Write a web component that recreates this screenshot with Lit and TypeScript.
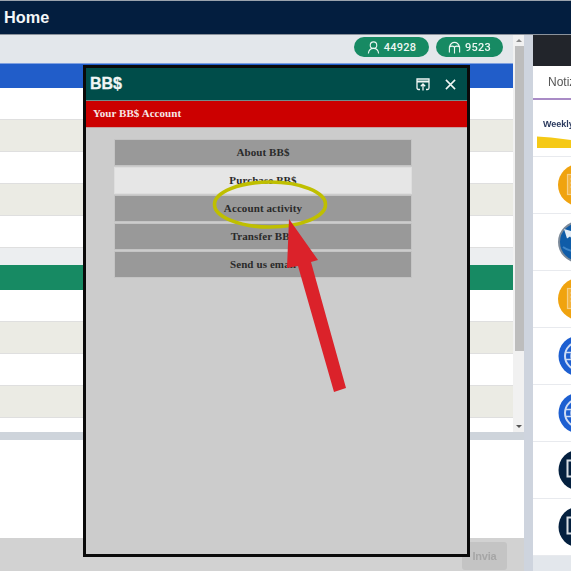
import { LitElement, html, css, svg } from "lit";
import { customElement } from "lit/decorators.js";

const orange = svg`<circle cx="21" cy="21" r="21" fill="#f0a30f"/><rect x="9.500" y="10.500" width="14" height="20" fill="#f3b23c" stroke="#f6cf85" stroke-width="1.200"/><path d="M12 15h9M12 19h9M12 23h5" stroke="#f6cf85" stroke-width="1"/>`;
const globe = svg`<circle cx="21" cy="21" r="20" fill="#0f5ca8" stroke="#7c8a9a" stroke-width="2"/><path d="M6 8l12 3.500-3 8-3-4-3 2z" fill="#e4edf6"/><path d="M5 26c8 6 20 6 34 0" stroke="#3f86c9" fill="none" stroke-width="2"/>`;
const web = svg`<circle cx="21" cy="21" r="20.500" fill="#1d5fd1"/><circle cx="21" cy="21" r="14" fill="none" stroke="#cfdcf4" stroke-width="2"/><circle cx="21" cy="21" r="8" fill="none" stroke="#cfdcf4" stroke-width="1.500"/><path d="M8 17.500h26M8 24.500h26" stroke="#cfdcf4" stroke-width="1.500"/>`;
const dark = svg`<circle cx="21" cy="21" r="20.500" fill="#04203f"/><path d="M9.500 11.500h22v16H18l-4 4.500v-4.500H9.500z" fill="none" stroke="#d7dde4" stroke-width="2"/>`;

@customElement("app-root")
export class AppRoot extends LitElement {
  static styles = css`
    :host { display: block; width: 571px; height: 571px; overflow: hidden; font-family: "Liberation Sans", Arial, sans-serif; background: #fff; }
    .stage { position: relative; width: 571px; height: 571px; display: flex; flex-direction: column; filter: blur(0.55px); }
    .top { height: 35px; flex: none; box-sizing: border-box; background: #031e3f; border-top: 1px solid #9aa3ad; border-bottom: 1px solid #8b929b; color: #f4f6f8; font-weight: 700; font-size: 16.300px; line-height: 33px; padding-left: 4px; }
    .main { flex: 1; display: flex; min-height: 0; }
    .left { width: 524px; flex: none; display: flex; flex-direction: column; }
    .gutter { width: 9px; flex: none; background: #ced4de; }
    .right { flex: 1; min-width: 0; display: flex; flex-direction: column; }
    .upper { height: 397px; flex: none; display: flex; }
    .content { width: 513px; flex: none; display: flex; flex-direction: column; }
    .tools { height: 28px; flex: none; background: #e3e7eb; display: flex; justify-content: flex-end; align-items: flex-start; gap: 7px; padding: 2px 10px 0 0; box-sizing: border-box; }
    .pill { height: 20px; border-radius: 10px; background: #178a63; color: #eef7f3; display: flex; align-items: center; justify-content: center; gap: 4px; font-family: Roboto, sans-serif; font-size: 11px; font-weight: 500; letter-spacing: 0.200px; }
    .pill.a { width: 75px; } .pill.b { width: 67px; }
    .pill svg { width: 13px; height: 13px; }
    .head { height: 25px; flex: none; box-sizing: border-box; border-top: 1px solid #7fa0e0; }
    .head.blue { background: #215dc9; }
    .head.green { background: #178a63; border-top: none; }
    .row { height: 32px; flex: none; box-sizing: border-box; background: #fff; border-bottom: 1px solid #dfdfdf; }
    .row.alt { background: #ebebe4; }
    .row.cut { height: 15px; border-bottom: none; }
    .spacer { height: 17px; flex: none; background: #eceef0; }
    .bar { width: 11px; flex: none; background: #f1f1f1; display: flex; flex-direction: column; align-items: flex-end; }
    .btn { height: 11px; flex: none; width: 100%; display: flex; align-items: center; justify-content: center; background: #f1f1f1; }
    .tri { width: 0; height: 0; border-left: 3px solid transparent; border-right: 3px solid transparent; }
    .tri.up { border-bottom: 3px solid #8a8a8a; } .tri.dn { border-top: 3px solid #555; }
    .thumb { height: 305px; width: 9px; background: #bdbdbd; flex: none; }
    .trackrest { flex: 1; }
    .sep { height: 8px; flex: none; background: #ced4db; }
    .lower { flex: 1; background: #fff; }
    .foot { height: 33px; flex: none; background: #d2d2d2; display: flex; justify-content: flex-end; padding: 4px 17px 0 0; box-sizing: border-box; }
    .send { width: 45px; height: 28px; border-radius: 3px; background: #c4c4c4; color: #a6a6a6; font-size: 11px; font-weight: 700; letter-spacing: -0.200px; display: flex; align-items: center; justify-content: center; }
    .rtop { height: 31px; flex: none; background: #22252b; }
    .tabs { height: 34px; flex: none; box-sizing: border-box; background: #fff; border-bottom: 2px solid #a98bc6; color: #555; font-size: 12px; line-height: 32px; padding-left: 15px; overflow: hidden; white-space: nowrap; }
    .weekly { height: 57px; flex: none; box-sizing: border-box; border-bottom: 1px solid #e8eaee; padding: 19px 0 0 10px; color: #2b3a5e; font-size: 9px; font-weight: 700; display: flex; flex-direction: column; gap: 7px; white-space: nowrap; overflow: hidden; background: #fff; }
    .weekly svg { display: block; margin-left: -6px; flex: none; }
    .item { height: 57px; flex: none; box-sizing: border-box; border-bottom: 1px solid #e8eaee; display: flex; align-items: center; padding-left: 25px; background: #fff; overflow: hidden; }
    .item svg { width: 42px; height: 42px; flex: none; }
    .rfoot { flex: 1; background: #e3e7ec; }
    .modal { position: absolute; left: 83px; top: 65px; width: 387px; height: 492px; box-sizing: border-box; border: 3px solid #0a0a0a; background: #cccccc; display: flex; flex-direction: column; }
    .mt { height: 33px; flex: none; box-sizing: border-box; background: #004d4a; border-bottom: 1px solid #6f8f8c; color: #f0f6f5; font-weight: 700; font-size: 16px; -webkit-text-stroke: 0.300px #f0f6f5; display: flex; align-items: center; justify-content: space-between; padding: 0 11px 0 4px; }
    .mi { display: flex; gap: 15px; align-items: center; }
    .mi svg { display: block; }
    .mr { height: 27px; flex: none; box-sizing: border-box; background: #cc0000; border-bottom: 1px solid #c9a0a0; color: #f7e6e6; font: 700 11px/25px "Liberation Serif", serif; letter-spacing: 0.060px; padding-left: 7px; }
    .menu { margin: 11px 55px 0 28px; display: flex; flex-direction: column; gap: 1px; }
    .mb { height: 27px; box-sizing: border-box; border: 1px solid #c4c4c4; background: #999; color: #2a2a2a; font: 700 11px/25px "Liberation Serif", serif; letter-spacing: 0.100px; text-align: center; }
    .mb.on { background: #e6e6e6; border-color: #dedede; }
    .ann { position: absolute; left: 0; top: 0; width: 571px; height: 571px; pointer-events: none; }
    .ring { fill: none; stroke: #bfbf00; stroke-width: 3.600px; }
    .arrow { fill: #db222a; }
  `;

  render() {
    const rows = (cutLast: boolean) => html`
      <div class="row"></div><div class="row alt"></div><div class="row"></div><div class="row alt"></div>
      <div class="row ${cutLast ? "cut" : ""}"></div>`;
    return html`
      <div class="stage">
        <div class="top">Home</div>
        <div class="main">
          <div class="left">
            <div class="upper">
              <div class="content">
                <div class="tools">
                  <div class="pill a"><svg viewBox="0 0 14 14" fill="none" stroke="#eef7f3" stroke-width="1.200"><circle cx="7" cy="4.500" r="3.500"/><path d="M1.500 13.500c.3-3.500 2.500-5.500 5.500-5.500s5.200 2 5.500 5.500"/></svg>44928</div>
                  <div class="pill b"><svg viewBox="0 0 14 14" fill="none" stroke="#eef7f3" stroke-width="1.200"><path d="M1.500 12.500V6.500C2.500 3.500 4.500 1.500 7 1.500s4.500 2 5.500 5v6M1.500 6.500C3.500 5.200 5.300 5.200 7 6.500c1.700-1.300 3.500-1.300 5.500 0M7 6.500v7"/></svg>9523</div>
                </div>
                <div class="head blue"></div>
                ${rows(false)}
                <div class="spacer"></div>
                <div class="head green"></div>
                ${rows(true)}
              </div>
              <div class="bar">
                <div class="btn"><div class="tri up"></div></div>
                <div class="thumb"></div>
                <div class="trackrest"></div>
                <div class="btn"><div class="tri dn"></div></div>
              </div>
            </div>
            <div class="sep"></div>
            <div class="lower"></div>
            <div class="foot"><div class="send">Invia</div></div>
          </div>
          <div class="gutter"></div>
          <div class="right">
            <div class="rtop"></div>
            <div class="tabs">Notizie</div>
            <div class="weekly">Weekly
              <svg width="34" height="12" viewBox="0 0 34 12"><path d="M0 0.500 L14 1.500 L34 4 V12 H0z" fill="#f5c916"/></svg>
            </div>
            <div class="item"><svg viewBox="0 0 42 42">${orange}</svg></div>
            <div class="item"><svg viewBox="0 0 42 42">${globe}</svg></div>
            <div class="item"><svg viewBox="0 0 42 42">${orange}</svg></div>
            <div class="item"><svg viewBox="0 0 42 42">${web}</svg></div>
            <div class="item"><svg viewBox="0 0 42 42">${web}</svg></div>
            <div class="item"><svg viewBox="0 0 42 42">${dark}</svg></div>
            <div class="item"><svg viewBox="0 0 42 42">${dark}</svg></div>
            <div class="rfoot"></div>
          </div>
        </div>
        <div class="modal">
          <div class="mt">BB$
            <div class="mi">
              <svg width="14" height="13" viewBox="0 0 14 13" fill="none" stroke="#f0f6f5" stroke-width="1.300"><path d="M4 11.500H2.500a1.500 1.500 0 0 1-1.500-1.500V1h12v9a1.500 1.500 0 0 1-1.500 1.500H10"/><path d="M1 3.500h12" stroke-width="2"/><path d="M7 12.500V6M4.800 8.200 7 6l2.200 2.200"/></svg>
              <svg width="11" height="11" viewBox="0 0 12 12" stroke="#f0f6f5" stroke-width="1.700"><path d="M1 1l10 10M11 1L1 11"/></svg>
            </div>
          </div>
          <div class="mr">Your BB$ Account</div>
          <div class="menu">
            <div class="mb">About BB$</div>
            <div class="mb on">Purchase BB$</div>
            <div class="mb">Account activity</div>
            <div class="mb">Transfer BB$</div>
            <div class="mb">Send us email</div>
          </div>
        </div>
        <svg class="ann" viewBox="0 0 571 571">
          <ellipse class="ring" cx="270" cy="204.500" rx="55.500" ry="22.500"/>
          <path class="arrow" d="M289 219 L287 268 L298 266 L334 392 L346 388 L311 262 L318 260 Z"/>
        </svg>
      </div>
    `;
  }
}
